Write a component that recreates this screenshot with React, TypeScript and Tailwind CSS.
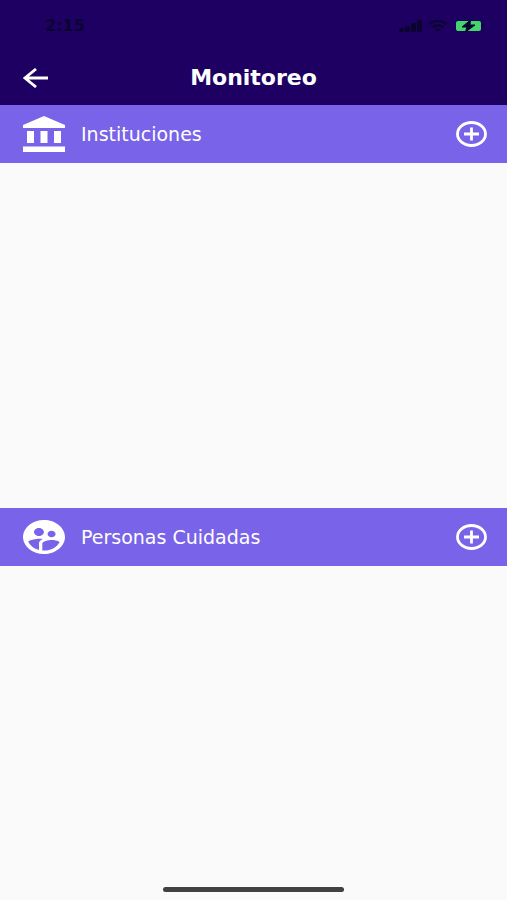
import type { ReactNode } from "react";

function StatusBar() {
  return (
    <div className="flex h-[50px] items-center justify-between pl-[45px] pr-[24px] pt-[2px] text-[#0b0430]">
      <span className="text-[16px] font-bold leading-5">2:15</span>
      <div className="flex items-center gap-[6px]">
        <svg className="h-[12px] w-[23px]" viewBox="0 0 23 12" fill="currentColor" aria-hidden="true">
          <rect x="0" y="8" width="5" height="4" rx="1" />
          <rect x="6" y="6" width="5" height="6" rx="1" />
          <rect x="12" y="3" width="5" height="9" rx="1" />
          <rect x="18" y="0" width="5" height="12" rx="1" />
        </svg>
        <svg className="h-[12px] w-[20px]" viewBox="0 0 20 12" fill="none" stroke="currentColor" strokeWidth="2.2" aria-hidden="true">
          <path d="M1 4.2C6 -.2 14 -.2 19 4.2M4.3 7.400C7.5 4.6 12.5 4.6 15.7 7.400" />
          <path d="M7 9.200Q10 7.200 13 9.200L10 12Z" fill="currentColor" stroke="none" />
        </svg>
        <svg className="ml-[1px] h-[14px] w-[28px]" viewBox="0 0 28 14" aria-hidden="true">
          <rect x="1" y="2" width="25" height="10" rx="2" fill="#42d66b" />
          <path d="M27 5v4q1-.5 1-2t-1-2z" fill="currentColor" />
          <path d="M15.5 1 7 8h5l-1.500 5L20 6h-5z" fill="currentColor" stroke="#0b0430" strokeWidth="1" />
        </svg>
      </div>
    </div>
  );
}

function BankIcon() {
  return (
    <svg className="h-[36px] w-[42px]" viewBox="0 0 42 36" fill="currentColor" aria-hidden="true">
      <path d="M21 0 42 9v3H0V9zM4 15H11v12H4zM17.500 15H24.500v12h-7zM31 15h7v12H31zM0 30.500h42V36H0z" />
    </svg>
  );
}

function PeopleIcon() {
  return (
    <svg className="h-[34px] w-[42px]" viewBox="2 2 20 20" preserveAspectRatio="none" fill="currentColor" aria-hidden="true">
      <path d="M11.99 2c-5.52 0-10 4.48-10 10s4.48 10 10 10 10-4.48 10-10-4.480-10-10-10zm3.610 6.340c1.070 0 1.930.86 1.930 1.930 0 1.070-.86 1.930-1.930 1.930-1.070 0-1.930-.86-1.930-1.930-.01-1.070.86-1.930 1.930-1.930zm-6-1.580c1.300 0 2.360 1.060 2.360 2.360 0 1.300-1.060 2.360-2.360 2.360s-2.360-1.060-2.360-2.360c0-1.310 1.050-2.360 2.360-2.360zm0 9.130v3.750c-2.400-.75-4.300-2.600-5.140-4.960 1.050-1.120 3.670-1.690 5.140-1.690.53 0 1.200.08 1.900.22-1.640.87-1.900 2.020-1.900 2.680zM11.990 20c-.27 0-.53-.01-.79-.04v-4.070c0-1.420 2.940-2.130 4.400-2.130 1.070 0 2.920.39 3.840 1.150-1.170 2.970-4.060 5.090-7.450 5.090z" />
    </svg>
  );
}

function SectionBar({ title, icon }: { title: string; icon: ReactNode }) {
  return (
    <div className="flex h-[58px] items-center bg-[#7963e8] pl-[23px] pr-[20px] text-white">
      {icon}
      <h2 className="ml-4 flex-1 text-[19px] leading-6">{title}</h2>
      <button type="button" aria-label={`Agregar: ${title}`}>
        <svg className="block h-[26px] w-[31px]" viewBox="0 0 31 26" fill="none" stroke="currentColor" aria-hidden="true">
          <ellipse cx="15.500" cy="13" rx="14" ry="11.500" strokeWidth="2.800" />
          <path d="M8 13h15M15.500 6.500v13" strokeWidth="2.800" />
        </svg>
      </button>
    </div>
  );
}

export default function App() {
  return (
    <div className="relative flex min-h-screen flex-col bg-[#fafafa] font-['DejaVu_Sans',sans-serif]">
      <header className="bg-[#1e0063] text-white">
        <StatusBar />
        <div className="grid h-[55px] grid-cols-[1fr_auto_1fr] items-center px-[23px]">
          <button type="button" aria-label="Volver" className="justify-self-start">
            <svg className="block h-[20px] w-[25px]" viewBox="0 0 25 20" fill="none" stroke="currentColor" strokeWidth="2.800" aria-hidden="true">
              <path d="M25 10H2M13 1 2 10l11 9" />
            </svg>
          </button>
          <h1 className="text-[22px] font-bold leading-7">Monitoreo</h1>
        </div>
      </header>
      <main className="flex flex-1 flex-col">
        <SectionBar title="Instituciones" icon={<BankIcon />} />
        <div className="mb-[10px] flex-1" />
        <SectionBar title="Personas Cuidadas" icon={<PeopleIcon />} />
        <div className="flex-1" />
      </main>
      {/* Home indicator floating over the content */}
      <div className="absolute inset-x-0 bottom-2 mx-auto h-[5px] w-[181px] rounded-full bg-[#414141]" />
    </div>
  );
}
